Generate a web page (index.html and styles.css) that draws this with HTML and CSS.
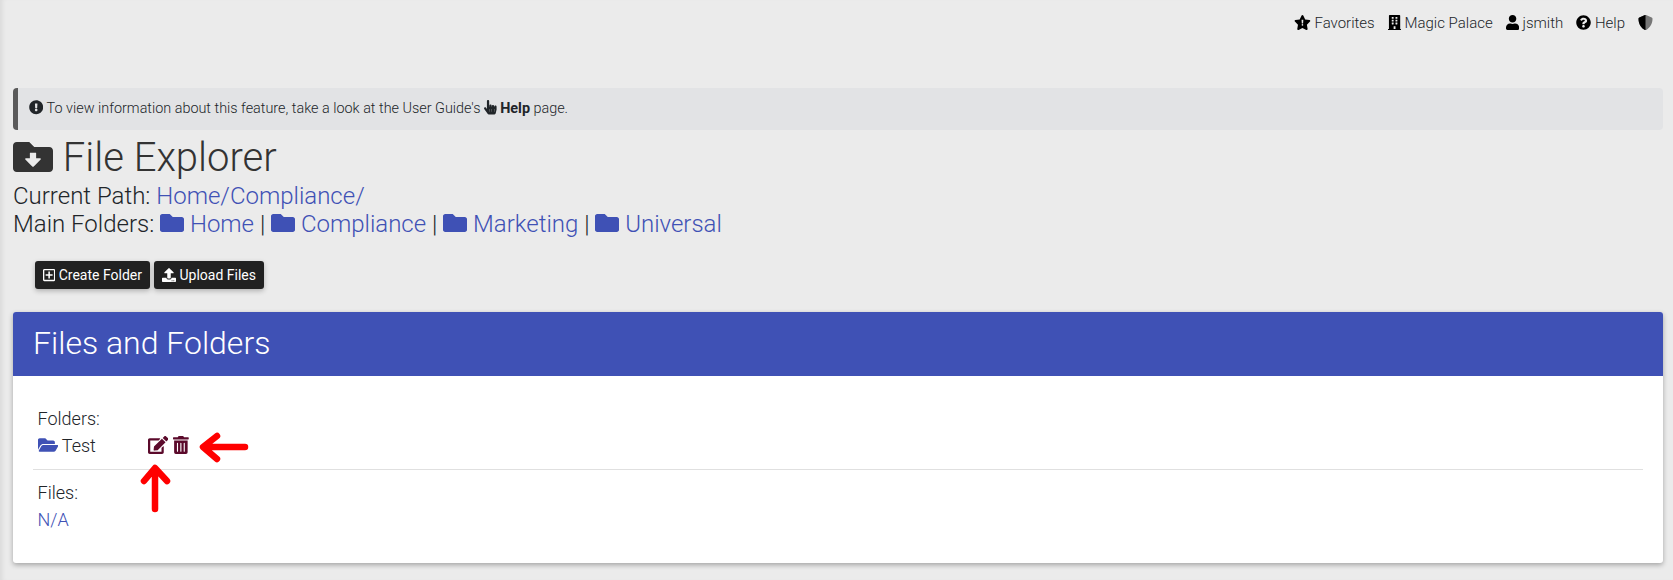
FILE: index.html
```html
<!DOCTYPE html>
<html lang="en">
<head>
<meta charset="utf-8">
<title>File Explorer</title>
<link rel="stylesheet" href="styles.css">
</head>
<body>
<div class="page">
  <nav class="topnav">
    <a class="navitem"><svg class="ico" viewBox="0 0 576 512"><path fill-rule="evenodd" d="M259.3 17.8L194 150.2 47.9 171.5c-26.2 3.8-36.7 36.1-17.7 54.6l105.7 103-25 145.5c-4.5 26.3 23.2 46 46.4 33.7L288 439.6l130.7 68.7c23.2 12.2 50.9-7.4 46.4-33.7l-25-145.5 105.7-103c19-18.5 8.5-50.8-17.7-54.6L382 150.2 316.7 17.8c-11.7-23.6-45.6-23.9-57.4 0zM258 160h60l-8 130h-44zM288 310a28 28 0 1 1 0 56a28 28 0 1 1 0-56z"/></svg> Favorites</a>
    <a class="navitem"><svg class="ico" viewBox="0 0 448 512"><path d="M436 480h-20V24c0-13.255-10.745-24-24-24H56C42.745 0 32 10.745 32 24v456H12c-6.627 0-12 5.373-12 12v20h448v-20c0-6.627-5.373-12-12-12zM128 76c0-6.627 5.373-12 12-12h40c6.627 0 12 5.373 12 12v40c0 6.627-5.373 12-12 12h-40c-6.627 0-12-5.373-12-12V76zm0 96c0-6.627 5.373-12 12-12h40c6.627 0 12 5.373 12 12v40c0 6.627-5.373 12-12 12h-40c-6.627 0-12-5.373-12-12v-40zm52 148h-40c-6.627 0-12-5.373-12-12v-40c0-6.627 5.373-12 12-12h40c6.627 0 12 5.373 12 12v40c0 6.627-5.373 12-12 12zm76 160h-64v-84c0-6.627 5.373-12 12-12h40c6.627 0 12 5.373 12 12v84zm64-172c0 6.627-5.373 12-12 12h-40c-6.627 0-12-5.373-12-12v-40c0-6.627 5.373-12 12-12h40c6.627 0 12 5.373 12 12v40zm0-96c0 6.627-5.373 12-12 12h-40c-6.627 0-12-5.373-12-12v-40c0-6.627 5.373-12 12-12h40c6.627 0 12 5.373 12 12v40zm0-96c0 6.627-5.373 12-12 12h-40c-6.627 0-12-5.373-12-12V76c0-6.627 5.373-12 12-12h40c6.627 0 12 5.373 12 12v40z"/></svg> Magic Palace</a>
    <a class="navitem"><svg class="ico" viewBox="0 0 448 512"><path d="M224 256c70.7 0 128-57.3 128-128S294.7 0 224 0 96 57.3 96 128s57.3 128 128 128zm89.6 32h-16.7c-22.2 10.2-46.9 16-72.9 16s-50.6-5.8-72.9-16h-16.7C60.2 288 0 348.2 0 422.4V464c0 26.5 21.5 48 48 48h352c26.5 0 48-21.5 48-48v-41.6c0-74.2-60.2-134.4-134.4-134.4z"/></svg> jsmith</a>
    <a class="navitem"><svg class="ico" viewBox="0 0 512 512"><path d="M504 256c0 136.997-111.043 248-248 248S8 392.997 8 256C8 119.083 119.043 8 256 8s248 111.083 248 248zM262.655 90c-54.497 0-89.255 22.957-116.549 63.758-3.536 5.286-2.353 12.415 2.715 16.258l34.699 26.31c5.205 3.947 12.621 3.008 16.665-2.122 17.864-22.658 30.113-35.797 57.303-35.797 20.429 0 45.698 13.148 45.698 32.958 0 14.976-12.363 22.667-32.534 33.976C247.128 238.528 216 254.941 216 296v4c0 6.627 5.373 12 12 12h56c6.627 0 12-5.373 12-12v-1.333c0-28.462 83.186-29.647 83.186-106.667 0-58.002-60.165-102-116.531-102zM256 338c-25.365 0-46 20.635-46 46 0 25.364 20.635 46 46 46s46-20.636 46-46c0-25.365-20.635-46-46-46z"/></svg> Help</a>
    <a class="navitem"><svg class="ico" viewBox="0 0 512 512"><path class="shield-back" d="M466.5 83.7l-192-80a48.15 48.15 0 0 0-36.9 0l-192 80C27.7 91.1 16 108.6 16 128c0 198.5 114.5 335.7 221.5 380.3 11.8 4.9 25.1 4.9 36.9 0C360.1 472.6 496 349.3 496 128c0-19.4-11.7-36.9-29.5-44.3z"/><path d="M256 0a48 48 0 0 0-18.4 3.7l-192 80C27.7 91.1 16 108.6 16 128c0 198.5 114.5 335.7 221.5 380.3a48 48 0 0 0 18.5 3.7z"/></svg></a>
  </nav>

  <div class="alert"><svg class="ico" viewBox="0 0 512 512"><path d="M504 256c0 136.997-111.043 248-248 248S8 392.997 8 256C8 119.083 119.043 8 256 8s248 111.083 248 248zm-248 50c-25.405 0-46 20.595-46 46s20.595 46 46 46 46-20.595 46-46-20.595-46-46-46zm-43.673-165.346l7.418 136c.347 6.364 5.609 11.346 11.982 11.346h48.546c6.373 0 11.635-4.982 11.982-11.346l7.418-136c.375-6.874-5.098-12.654-11.982-12.654h-63.383c-6.884 0-12.356 5.78-11.981 12.654z"/></svg> To view information about this feature, take a look at the User Guide's <svg class="ico" viewBox="0 0 448 512"><path d="M448 240v96c0 3.084-.356 6.159-1.063 9.162l-32 136C410.686 499.23 394.562 512 376 512H168a40.004 40.004 0 0 1-32.35-16.473l-127.997-176c-12.993-17.866-9.043-42.883 8.822-55.876 17.867-12.994 42.884-9.043 55.877 8.823L104 315.992V40c0-22.091 17.908-40 40-40s40 17.909 40 40v200h8v-40c0-22.091 17.908-40 40-40s40 17.909 40 40v40h8v-24c0-22.091 17.908-40 40-40s40 17.909 40 40v24h8c0-22.091 17.908-40 40-40s40 17.909 40 40zm-256 80h-8v96h8v-96zm88 0h-8v96h8v-96zm88 0h-8v96h8v-96z"/></svg> <b>Help</b> page.</div>

  <h1 class="title"><svg class="ico" viewBox="0 0 512 512"><path fill-rule="evenodd" d="M464 128H272l-64-64H48C21.49 64 0 85.49 0 112v288c0 26.51 21.49 48 48 48h416c26.51 0 48-21.49 48-48V176c0-26.51-21.49-48-48-48zM216 200h80v72h52c8 0 12 10 6 16l-88 88c-5 5-15 5-20 0l-88-88c-6-6-2-16 6-16h52z"/></svg> File Explorer</h1>

  <div class="paths">
    <div>Current Path: <a class="link">Home/Compliance/</a></div>
    <div>Main Folders: <a class="link"><svg class="ico" viewBox="0 0 512 512"><path d="M464 128H272l-64-64H48C21.49 64 0 85.49 0 112v288c0 26.51 21.49 48 48 48h416c26.51 0 48-21.49 48-48V176c0-26.51-21.49-48-48-48z"/></svg> Home</a> | <a class="link"><svg class="ico" viewBox="0 0 512 512"><path d="M464 128H272l-64-64H48C21.49 64 0 85.49 0 112v288c0 26.51 21.49 48 48 48h416c26.51 0 48-21.49 48-48V176c0-26.51-21.49-48-48-48z"/></svg> Compliance</a> | <a class="link"><svg class="ico" viewBox="0 0 512 512"><path d="M464 128H272l-64-64H48C21.49 64 0 85.49 0 112v288c0 26.51 21.49 48 48 48h416c26.51 0 48-21.49 48-48V176c0-26.51-21.49-48-48-48z"/></svg> Marketing</a> | <a class="link"><svg class="ico" viewBox="0 0 512 512"><path d="M464 128H272l-64-64H48C21.49 64 0 85.49 0 112v288c0 26.51 21.49 48 48 48h416c26.51 0 48-21.49 48-48V176c0-26.51-21.49-48-48-48z"/></svg> Universal</a></div>
  </div>

  <div class="actions">
    <button class="btn"><svg class="ico" viewBox="0 0 448 512"><path d="M352 240v32c0 6.6-5.4 12-12 12h-88v88c0 6.6-5.4 12-12 12h-32c-6.6 0-12-5.4-12-12v-88h-88c-6.6 0-12-5.4-12-12v-32c0-6.6 5.4-12 12-12h88v-88c0-6.6 5.4-12 12-12h32c6.6 0 12 5.4 12 12v88h88c6.6 0 12 5.4 12 12zm96-160v352c0 26.5-21.5 48-48 48H48c-26.5 0-48-21.5-48-48V80c0-26.5 21.5-48 48-48h352c26.5 0 48 21.5 48 48zm-48 346V86c0-3.3-2.7-6-6-6H54c-3.3 0-6 2.7-6 6v340c0 3.3 2.7 6 6 6h340c3.3 0 6-2.7 6-6z"/></svg> Create Folder</button>
    <button class="btn"><svg class="ico" viewBox="0 0 512 512"><path d="M296 384h-80c-13.3 0-24-10.7-24-24V192h-87.7c-17.8 0-26.7-21.5-14.1-34.1L242.3 5.7c7.5-7.5 19.8-7.5 27.3 0l152.2 152.2c12.6 12.6 3.7 34.1-14.1 34.1H320v168c0 13.3-10.7 24-24 24zm216-8v112c0 13.3-10.7 24-24 24H24c-13.3 0-24-10.7-24-24V376c0-13.3 10.7-24 24-24h136v8c0 30.9 25.1 56 56 56h80c30.9 0 56-25.1 56-56v-8h136c13.3 0 24 10.7 24 24zm-124 88c0-11-9-20-20-20s-20 9-20 20 9 20 20 20 20-9 20-20zm64 0c0-11-9-20-20-20s-20 9-20 20 9 20 20 20 20-9 20-20z"/></svg> Upload Files</button>
  </div>

  <section class="card">
    <header class="card-head">Files and Folders</header>
    <div class="card-body">
      <div class="block">
        <div>Folders:</div>
        <div class="folder-row">
          <span class="folder-name"><svg class="ico folder-ico" viewBox="0 0 576 512"><path d="M572.694 292.093L500.27 416.248A63.997 63.997 0 0 1 444.989 448H45.025c-18.523 0-30.064-20.093-20.731-36.093l72.424-124.155A64 64 0 0 1 152 256h399.964c18.523 0 30.064 20.093 20.73 36.093zM152 224h328v-48c0-26.51-21.49-48-48-48H272l-64-64H48C21.49 64 0 85.49 0 112v278.046l69.077-118.418C86.214 242.25 117.989 224 152 224z"/></svg> Test</span>
          <span class="row-tools">
            <svg class="ico" viewBox="0 0 576 512"><path d="M402.6 83.2l90.2 90.2c3.8 3.8 3.8 10 0 13.8L274.4 405.6l-92.8 10.3c-12.4 1.4-22.9-9.1-21.5-21.5l10.3-92.8L388.8 83.2c3.8-3.8 10-3.8 13.8 0zm162-22.9l-48.8-48.8c-15.2-15.2-39.9-15.2-55.2 0l-35.4 35.4c-3.8 3.8-3.8 10 0 13.8l90.2 90.2c3.8 3.8 10 3.8 13.8 0l35.4-35.4c15.2-15.3 15.2-40 0-55.2zM384 346.2V448H64V128h229.8c3.2 0 6.2-1.3 8.5-3.5l40-40c7.6-7.6 2.2-20.5-8.5-20.5H48C21.5 64 0 85.5 0 112v352c0 26.5 21.5 48 48 48h352c26.5 0 48-21.5 48-48V306.2c0-10.7-12.9-16-20.5-8.5l-40 40c-2.2 2.3-3.5 5.3-3.5 8.5z"/></svg>
            <svg class="ico" viewBox="0 0 448 512"><path d="M32 464a48 48 0 0 0 48 48h288a48 48 0 0 0 48-48V128H32zm272-256a16 16 0 0 1 32 0v224a16 16 0 0 1-32 0zm-96 0a16 16 0 0 1 32 0v224a16 16 0 0 1-32 0zm-96 0a16 16 0 0 1 32 0v224a16 16 0 0 1-32 0zM432 32H312l-9-19a24 24 0 0 0-22-13H167a24 24 0 0 0-21 13l-9 19H16A16 16 0 0 0 0 48v32a16 16 0 0 0 16 16h416a16 16 0 0 0 16-16V48a16 16 0 0 0-16-16z"/></svg>
          </span>
        </div>
      </div>
      <hr class="rule">
      <div class="block">
        <div>Files:</div>
        <div class="na">N/A</div>
      </div>
    </div>
  </section>

  <svg class="marks" viewBox="0 0 1673 580" width="1673" height="580">
    <path class="arrow" d="M245 447H204M217 436L203 447L217 459"/>
    <path class="arrow" d="M155 509V470M144 481L155 468L167 481"/>
  </svg>
</div>
</body>
</html>
```
FILE: styles.css
```css
* { box-sizing: border-box; }
html, body { margin: 0; padding: 0; }
body {
  background: #ebebeb;
  font-family: Roboto, "Liberation Sans", sans-serif;
  font-weight: 300;
  color: #212529;
  height: 580px;
  overflow: hidden;
}
.page {
  position: relative;
  height: 580px;
  padding: 0 10px 0 13px;
  box-shadow: inset 5px 0 5px -3px rgba(0,0,0,.08);
}
.ico { height: 1em; width: auto; fill: currentColor; vertical-align: -0.125em; }
.topnav {
  height: 88px;
  padding: 12px 10px 0 0;
  display: flex;
  justify-content: flex-end;
  gap: 13px;
  font-size: 15px;
  line-height: 22px;
}
.navitem { color: #212529; white-space: nowrap; }
.navitem .ico { color: #000; }
.shield-back { fill: #777; }
.alert {
  height: 42px;
  background: #e2e3e5;
  border-left: 5px solid #5a5a5a;
  border-radius: 4px;
  padding: 0 0 0 11px;
  font-size: 14.4px;
  line-height: 41px;
  color: #212529;
}
.alert b { font-weight: 700; }
.title {
  margin: 4px 0 0;
  font-size: 40px;
  font-weight: 300;
  line-height: 48px;
  color: #333;
}
.title .ico { width: 40px; height: 40px; vertical-align: -6px; }
.paths {
  font-size: 24px;
  line-height: 28.8px;
  margin-top: -0.5px;
  color: #212529;
}
.link { color: #3f51b5; }
.actions {
  display: flex;
  gap: 4px;
  margin-top: 21.9px;
  padding-left: 22px;
}
.btn {
  height: 28px;
  border: 0;
  border-radius: 3px;
  background: #212121;
  color: #fff;
  font: 400 14px Roboto, sans-serif;
  padding: 0 8px;
  box-shadow: 0 2px 5px rgba(0,0,0,.25);
}
.card {
  margin-top: 23px;
  height: 251px;
  background: #fff;
  border-radius: 3px;
  box-shadow: 0 2px 5px rgba(0,0,0,.3);
  overflow: hidden;
}
.card-head {
  height: 64px;
  background: #3f51b5;
  color: #fff;
  font-size: 32px;
  font-weight: 300;
  line-height: 62px;
  padding-left: 20px;
}
.card-body { padding: 29px 20px 0 20px; font-size: 18px; line-height: 27px; }
.block { padding-left: 4.5px; color: #212529; }
.folder-row { display: flex; align-items: center; }
.folder-name { width: 110.5px; }
.folder-ico { color: #3f51b5; }
.row-tools { display: inline-flex; gap: 5px; font-size: 18px; color: #5b0a2b; }
.rule { border: 0; border-top: 1px solid #e0e0e0; margin: 10px 0 9px; }
.na { color: #3f51b5; }
.marks { position: absolute; left: 0; top: 0; pointer-events: none; }
.arrow { fill: none; stroke: #ff0000; stroke-width: 6.5; stroke-linecap: round; stroke-linejoin: round; }
```
